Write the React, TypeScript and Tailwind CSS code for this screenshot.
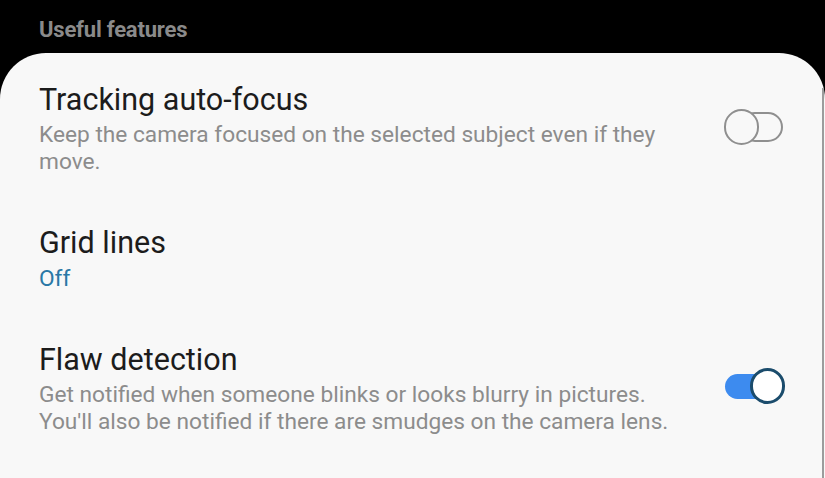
import React from "react";

function OffSwitch() {
  return (
    <div className="relative w-[61px] h-[36px] shrink-0 mb-[4px]">
      <div className="absolute left-[16px] right-[2px] top-[3px] h-[30px] rounded-full border-2 border-[#8f8f8f]" />
      <div className="absolute left-0 top-0 w-[35px] h-[36px] rounded-full border-2 border-[#8f8f8f] bg-[#f8f8f8]" />
    </div>
  );
}

function OnSwitch() {
  return (
    <div className="relative w-[60px] h-[36px] shrink-0 mb-[6px]">
      <div className="absolute left-0 right-[12px] top-[6px] h-[25px] rounded-full bg-[#3d8bef]" />
      <div className="absolute right-0 top-0 w-[35px] h-[36px] rounded-full border-[3px] border-[#1b4c6c] bg-white" />
    </div>
  );
}

const font = { fontFamily: "Roboto, 'Noto Sans', sans-serif" };

export default function App() {
  return (
    <div className="w-[825px] h-[478px] bg-black overflow-hidden flex flex-col" style={font}>
      <div className="h-[53px] shrink-0 flex items-center pl-[39px] pt-[6px]">
        <span className="text-[22px] font-bold text-[#8a8a8a] tracking-[-0.2px] leading-none">Useful features</span>
      </div>
      <div className="relative flex-1 bg-[#f8f8f8] rounded-t-[46px] flex flex-col pt-[4px]">
        <div className="flex items-center pl-[39px] pr-[40px] py-[25px]">
          <div className="flex-1">
            <div className="text-[30.5px] leading-[36px] text-[#1c1c1c]">Tracking auto-focus</div>
            <div className="mt-[3px] text-[22.7px] leading-[27px] text-[#8c8c8c] pr-[40px]">
              Keep the camera focused on the selected subject even if they move.
            </div>
          </div>
          <OffSwitch />
        </div>
        <div className="flex items-center pl-[39px] pr-[40px] py-[25px]">
          <div className="flex-1">
            <div className="text-[30.5px] leading-[36px] text-[#1c1c1c]">Grid lines</div>
            <div className="mt-[4px] text-[22.7px] leading-[27px] text-[#2a78a6]">Off</div>
          </div>
        </div>
        <div className="flex items-center pl-[39px] pr-[40px] py-[25px]">
          <div className="flex-1">
            <div className="text-[30.5px] leading-[36px] text-[#1c1c1c]">Flaw detection</div>
            <div className="mt-[3px] text-[22.7px] leading-[27px] text-[#8c8c8c] whitespace-nowrap">
              Get notified when someone blinks or looks blurry in pictures.
              <br />
              You'll also be notified if there are smudges on the camera lens.
            </div>
          </div>
          <OnSwitch />
        </div>
        <div className="absolute right-[1px] top-[35px] bottom-0 w-[2px] bg-[#9c9c9c]" />
      </div>
    </div>
  );
}
